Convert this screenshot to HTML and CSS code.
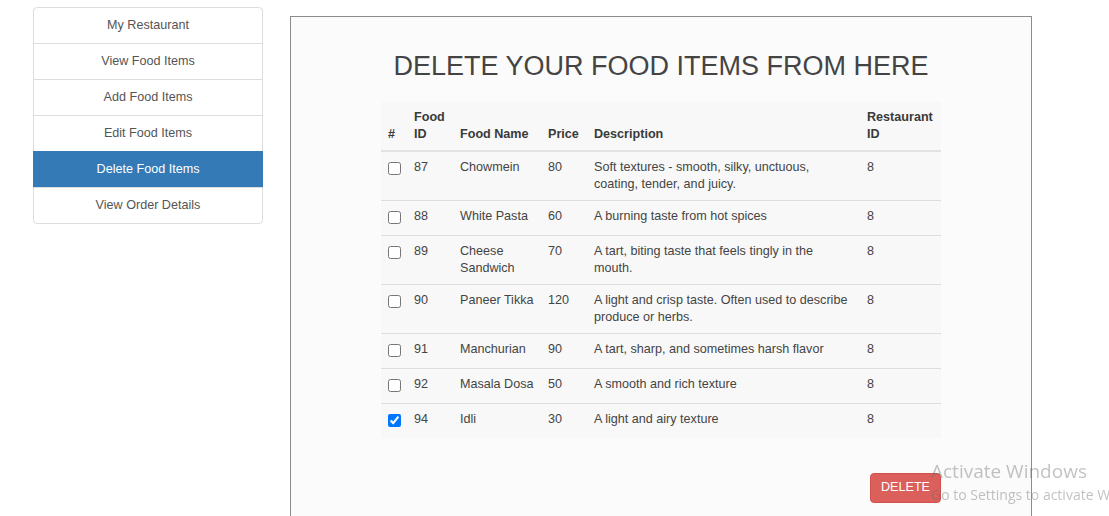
FILE: index.html
```html
<!DOCTYPE html>
<html lang="en">
<head>
<meta charset="utf-8">
<title>Delete Food Items</title>
<link rel="stylesheet" href="styles.css">
</head>
<body>
<div class="layout">
  <nav class="list-group">
    <a class="list-item" href="#">My Restaurant</a>
    <a class="list-item" href="#">View Food Items</a>
    <a class="list-item" href="#">Add Food Items</a>
    <a class="list-item" href="#">Edit Food Items</a>
    <a class="list-item active" href="#">Delete Food Items</a>
    <a class="list-item" href="#">View Order Details</a>
  </nav>
  <main class="panel">
    <h2 class="title">DELETE YOUR FOOD ITEMS FROM HERE</h2>
    <form class="form">
      <table class="table">
        <colgroup>
          <col class="c-sel"><col class="c-id"><col class="c-name"><col class="c-price"><col class="c-desc"><col class="c-rid">
        </colgroup>
        <thead>
          <tr><th>#</th><th>Food ID</th><th>Food Name</th><th>Price</th><th>Description</th><th>Restaurant ID</th></tr>
        </thead>
        <tbody>
          <tr><td><input class="check" type="checkbox"></td><td>87</td><td>Chowmein</td><td>80</td><td>Soft textures - smooth, silky, unctuous, coating, tender, and juicy.</td><td>8</td></tr>
          <tr><td><input class="check" type="checkbox"></td><td>88</td><td>White Pasta</td><td>60</td><td>A burning taste from hot spices</td><td>8</td></tr>
          <tr><td><input class="check" type="checkbox"></td><td>89</td><td>Cheese Sandwich</td><td>70</td><td>A tart, biting taste that feels tingly in the mouth.</td><td>8</td></tr>
          <tr><td><input class="check" type="checkbox"></td><td>90</td><td>Paneer Tikka</td><td>120</td><td>A light and crisp taste. Often used to describe produce or herbs.</td><td>8</td></tr>
          <tr><td><input class="check" type="checkbox"></td><td>91</td><td>Manchurian</td><td>90</td><td>A tart, sharp, and sometimes harsh flavor</td><td>8</td></tr>
          <tr><td><input class="check" type="checkbox"></td><td>92</td><td>Masala Dosa</td><td>50</td><td>A smooth and rich texture</td><td>8</td></tr>
          <tr><td><input class="check" type="checkbox" checked></td><td>94</td><td>Idli</td><td>30</td><td>A light and airy texture</td><td>8</td></tr>
        </tbody>
      </table>
      <div class="actions">
        <button class="btn-danger" type="button">DELETE</button>
      </div>
    </form>
  </main>
</div>
<div class="watermark">
  <div class="wm-title">Activate Windows</div>
  <div class="wm-sub">Go to Settings to activate Windows.</div>
</div>
</body>
</html>
```
FILE: styles.css
```css
html {
  overflow: hidden;
}
body {
  margin: 0;
  background: #ffffff;
  font-family: "Liberation Sans", Arial, Helvetica, sans-serif;
  font-size: 12.6px;
  line-height: 17px;
  color: #333333;
}
.layout {
  display: flex;
  align-items: flex-start;
  padding-left: 33px;
}
.list-group {
  width: 230px;
  margin-top: 7px;
  display: flex;
  flex-direction: column;
}
.list-item {
  display: block;
  padding: 9px 15px;
  margin-bottom: -1px;
  border: 1px solid #dddddd;
  background: #ffffff;
  color: #555555;
  text-align: center;
  text-decoration: none;
  line-height: 17px;
}
.list-item:first-child {
  border-radius: 4px 4px 0 0;
}
.list-item:last-child {
  border-radius: 0 0 4px 4px;
  margin-bottom: 0;
}
.list-item.active {
  background: #337ab7;
  border-color: #337ab7;
  color: #ffffff;
}
.panel {
  box-sizing: border-box;
  width: 742px;
  min-height: 560px;
  margin-left: 27px;
  margin-top: 16px;
  border: 1px solid #8c8c8c;
  background: #fbfbfb;
  padding-top: 34px;
}
.title {
  margin: 0;
  text-align: center;
  font-size: 27px;
  line-height: 30px;
  font-weight: 500;
  color: #444444;
}
.form {
  width: 560px;
  margin: 21px auto 0;
}
.table {
  width: 560px;
  table-layout: fixed;
  border-collapse: collapse;
  background: #f8f8f8;
}
.c-sel { width: 25px; }
.c-id { width: 46px; }
.c-name { width: 88px; }
.c-price { width: 46px; }
.c-desc { width: 273px; }
.c-rid { width: 82px; }
.table th,
.table td {
  padding: 7px 4px 7px 8px;
  text-align: left;
  line-height: 17px;
}
.table th:first-child,
.table td:first-child {
  padding-left: 7px;
}
.table th {
  vertical-align: bottom;
  font-weight: bold;
  color: #3a3a3a;
  border-bottom: 2px solid #e2e2e2;
}
.table td {
  vertical-align: top;
  border-top: 1px solid #dddddd;
  color: #444444;
}
.check {
  display: block;
  width: 13px;
  height: 13px;
  margin: 3px 0 4px;
}
.actions {
  display: flex;
  justify-content: flex-end;
  margin-top: 35px;
}
.btn-danger {
  font-family: "Liberation Sans", Arial, sans-serif;
  font-size: 12.6px;
  line-height: 17px;
  padding: 5px 10px 6px;
  color: #ffffff;
  background: #db5f5b;
  border: 1px solid #d4504c;
  border-radius: 4px;
}
.watermark {
  position: fixed;
  left: 931px;
  top: 457px;
  white-space: nowrap;
  font-family: "Open Sans", "Noto Sans", sans-serif;
  color: rgba(110, 110, 110, 0.42);
  pointer-events: none;
}
.wm-title {
  font-size: 19px;
  line-height: 28px;
}
.wm-sub {
  font-size: 14px;
  line-height: 20px;
  margin-top: 0;
}
```
